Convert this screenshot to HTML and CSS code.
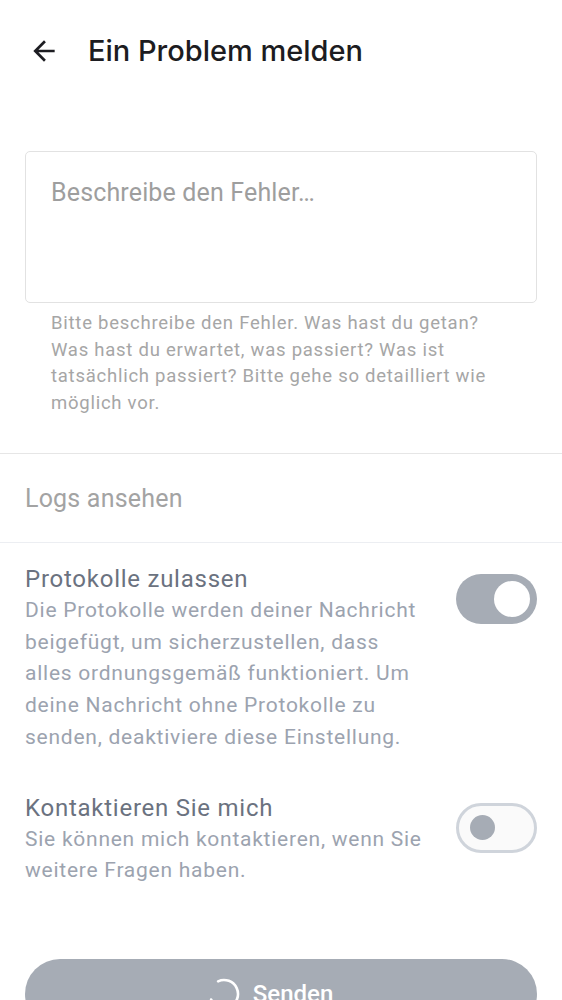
FILE: index.html
```html
<!DOCTYPE html>
<html lang="de">
<head>
<meta charset="utf-8">
<title>Ein Problem melden</title>
<link rel="stylesheet" href="styles.css">
</head>
<body>
<div class="page">
  <header class="topbar">
    <svg class="back" viewBox="0 0 24 24" width="32" height="32"><path d="M20 11H7.83l5.59-5.59L12 4l-8 8 8 8 1.41-1.41L7.83 13H20v-2z" fill="#1d1d22"/></svg>
    <h1 class="title">Ein Problem melden</h1>
  </header>

  <section class="report">
    <div class="textbox"><span class="placeholder">Beschreibe den Fehler…</span></div>
    <p class="helper">Bitte beschreibe den Fehler. Was hast du getan? Was hast du erwartet, was passiert? Was ist tatsächlich passiert? Bitte gehe so detailliert wie möglich vor.</p>
  </section>

  <div class="logs">Logs ansehen</div>

  <section class="settings">
    <div class="setting">
      <div class="setting-text">
        <div class="setting-label">Protokolle zulassen</div>
        <div class="setting-desc">Die Protokolle werden deiner Nachricht beigefügt, um sicherzustellen, dass alles ordnungsgemäß funktioniert. Um deine Nachricht ohne Protokolle zu senden, deaktiviere diese Einstellung.</div>
      </div>
      <div class="switch on"><span class="knob"></span></div>
    </div>
    <div class="setting">
      <div class="setting-text">
        <div class="setting-label">Kontaktieren Sie mich</div>
        <div class="setting-desc">Sie können mich kontaktieren, wenn Sie weitere Fragen haben.</div>
      </div>
      <div class="switch off"><span class="knob"></span></div>
    </div>
  </section>

  <div class="actions">
    <button class="send">
      <svg class="spinner" viewBox="0 0 34 34" width="34" height="34"><circle cx="17" cy="17" r="14" fill="none" stroke="#fff" stroke-width="2.6" stroke-dasharray="66 22" stroke-linecap="round" transform="rotate(-115 17 17)"/></svg>
      <span>Senden</span>
    </button>
  </div>
</div>
</body>
</html>
```

FILE: styles.css
```css
* { box-sizing: border-box; }
html, body { margin: 0; padding: 0; background: #fff; }
body { font-family: Roboto, "Noto Sans", sans-serif; width: 562px; height: 1000px; overflow: hidden; }

.topbar {
  height: 100px;
  display: flex;
  align-items: center;
  padding-left: 28px;
  padding-top: 1px;
}
.back { display: block; flex: none; }
.title {
  margin: 0 0 0 28px;
  font-family: Inter, Roboto, sans-serif;
  font-size: 29px;
  font-weight: 500;
  color: #1c1c21;
  letter-spacing: 0;
}

.report { padding: 51px 25px 0; }
.textbox {
  height: 152px;
  border: 1px solid #e2e2e2;
  border-radius: 5px;
  padding: 26px 25px 0;
}
.placeholder {
  font-size: 25px;
  letter-spacing: 0.15px;
  color: #9e9e9e;
  line-height: 30px;
}
.helper {
  margin: 7px 0 0;
  padding: 0 32px 0 26px;
  font-size: 18.5px;
  line-height: 26.5px;
  letter-spacing: 0.75px;
  color: #a6a6a6;
}

.logs {
  margin-top: 37px;
  border-top: 1px solid #e6e6e6;
  border-bottom: 1px solid #eceef2;
  height: 90px;
  display: flex;
  align-items: center;
  padding: 0 25px;
  font-size: 25px;
  letter-spacing: 0.2px;
  color: #a3a3a3;
}

.settings { padding: 20px 25px 0; }
.setting {
  display: flex;
  align-items: flex-start;
  gap: 30px;
  margin-bottom: 38px;
}
.setting-text { flex: 1; }
.setting-label {
  font-size: 24px;
  line-height: 32px;
  color: #6b7280;
  letter-spacing: 0.75px;
}
.setting-desc {
  font-size: 21px;
  line-height: 31.7px;
  color: #9ca3af;
  letter-spacing: 0.75px;
}
.switch {
  flex: none;
  width: 81px;
  height: 50px;
  border-radius: 25px;
  margin-top: 11px;
  display: flex;
  align-items: center;
}
.switch.on { background: #a6acb5; justify-content: flex-end; padding-right: 7px; }
.switch.on .knob { width: 36px; height: 36px; border-radius: 50%; background: #fff; }
.switch.off { background: #fafafa; border: 3px solid #cfd4db; padding-left: 11px; }
.switch.off .knob { width: 25px; height: 25px; border-radius: 50%; background: #a6acb5; }

.actions { padding: 34px 25px 0; }
.send {
  width: 100%;
  height: 70px;
  border: none;
  border-radius: 35px;
  background: #a6acb5;
  color: #fff;
  font-family: Roboto, sans-serif;
  font-size: 24px;
  font-weight: 500;
  display: flex;
  align-items: center;
  justify-content: center;
  gap: 12px;
  padding: 0 22px 0 0;
}
.spinner { display: block; }
```
